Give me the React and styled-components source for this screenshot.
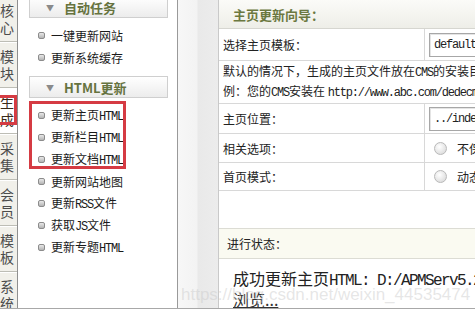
import React from "react";
import styled, { createGlobalStyle } from "styled-components";

const GlobalStyle = createGlobalStyle`
    body {
        margin: 0;
        background: #fff;
        overflow: hidden;
        font-family: "Noto Sans CJK SC", "Liberation Sans", sans-serif;
        font-size: 12px;
        color: #222;
    }
`

const Page = styled.div`
    display: flex;
    height: 308px;
    border-bottom: 1px solid #a8a8a8;
    overflow: hidden;
    `
const TabColumn = styled.div`
    width: 17px;
    flex-shrink: 0;
    border-right: 1px solid #8f8f8f;
    background: #f1f0ea;
    margin-top: -4px;
    `
const Tab = styled.div`
    height: 45px;
    display: flex;
    flex-direction: column;
    align-items: center;
    justify-content: center;
    padding-right: 3px;
    font-size: 14px;
    line-height: 17px;
    color: ${p => p.$active ? "#3a2a1a" : "#4c4c4c"};
    background: ${p => p.$active ? "#fff" : "transparent"};
    border-bottom: 1px solid #bdbdb5;
    box-shadow: 0 1px 0 #fff;
    position: relative;
    `
const TabMark = styled.span`
    position: absolute;
    left: -3px;
    right: 0;
    top: 7px;
    bottom: 8px;
    border: 3px solid #d53b43;
    `
const Menu = styled.div`
    width: 159px;
    flex-shrink: 0;
    border-right: 1px solid #9a9a9a;
    margin-top: -4px;
    `
const Group = styled.div`
    margin-bottom: ${p => p.$gap || 0}px;
    `
const GroupHead = styled.div`
    height: 20px;
    margin-left: 11px;
    width: 121px;
    display: flex;
    align-items: center;
    gap: 10px;
    padding-left: 16px;
    border: 1px solid #cfcfcf;
    background: linear-gradient(#ffffff, #ececec);
    font-size: 13px;
    font-weight: bold;
    color: #66733f;
    box-sizing: content-box;
    `
const Arrow = styled.span`
    font-size: 8px;
    color: #8a8a8a;
    font-weight: normal;
    `
const ItemList = styled.ul`
    list-style: none;
    margin: 0;
    padding: 6px 0 0 0;
    position: relative;
    `
const Item = styled.li`
    height: 22px;
    display: flex;
    align-items: center;
    gap: 6px;
    padding-left: 20px;
    font-size: 12px;
    color: #1a1a1a;
    `
const Bullet = styled.span`
    width: 5px;
    height: 5px;
    border: 1px solid #8c8c8c;
    border-radius: 2px;
    background: linear-gradient(#e8e8e8, #b4b4b4);
    `
const Label = styled.span`
    white-space: nowrap;
    `
const Latin = styled.span`
    font-family: "Liberation Mono", monospace;
    letter-spacing: -1.2px;
    `
const HighlightBox = styled.div`
    position: absolute;
    left: 11px;
    top: 3px;
    width: 91px;
    height: 62px;
    border: 3px solid #d53b43;
    pointer-events: none;
    `
const Splitter = styled.div`
    width: 40px;
    flex-shrink: 0;
    background: linear-gradient(90deg, #f7f7f7 0, #f3f3f3 19px, #e9e9e9 20px, #ececec 40px);
    border-right: 1px solid #c9c9c9;
    `
const Panel = styled.div`
    flex: 1;
    display: flex;
    flex-direction: column;
    min-width: 0;
    `
const PanelHead = styled.div`
    height: 28px;
    flex-shrink: 0;
    display: flex;
    align-items: center;
    padding-left: 14px;
    background: linear-gradient(#fbfbf8, #eeeee8);
    border-bottom: 1px solid #d6d6d0;
    font-size: 13px;
    font-weight: bold;
    color: #6b7840;
    `
const Table = styled.div`
    display: grid;
    grid-template-columns: 205px 1fr;
    `
const Cell = styled.div`
    height: ${p => p.$h}px;
    display: flex;
    align-items: center;
    padding-left: ${p => p.$pad ?? 4}px;
    border-bottom: 1px solid #d8d8d8;
    border-left: ${p => p.$sep ? "1px solid #d8d8d8" : "none"};
    grid-column: ${p => p.$wide ? "1 / 3" : "auto"};
    white-space: nowrap;
    overflow: hidden;
    `
const Note = styled.div`
    display: flex;
    flex-direction: column;
    line-height: 17px;
    `
const Field = styled.div`
    height: 22px;
    width: 60px;
    flex-shrink: 0;
    display: flex;
    align-items: center;
    padding-left: 4px;
    border: 1px solid #a7a7a7;
    border-right: none;
    box-shadow: inset 1px 1px 0 #e4e4e4;
    `
const Radio = styled.span`
    width: 11px;
    height: 11px;
    margin-left: 9px;
    margin-right: 10px;
    flex-shrink: 0;
    border-radius: 50%;
    border: 1px solid #b9b9b9;
    background: radial-gradient(circle at 40% 35%, #ffffff, #d4d4d4);
    `
const Blank = styled.div`
    height: 37px;
    `
const StatusHead = styled.div`
    height: 29px;
    display: flex;
    align-items: center;
    padding-left: 8px;
    background: #fafaf1;
    border-top: 1px solid #dcdcd4;
    border-bottom: 1px solid #dcdcd4;
    `
const StatusBody = styled.div`
    padding: 10px 0 0 14px;
    font-size: 16px;
    line-height: 18px;
    white-space: nowrap;
    position: relative;
    `
const BigLatin = styled.span`
    font-family: "Liberation Mono", monospace;
    letter-spacing: -1.6px;
    `
const Link = styled.a`
    color: #333;
    text-decoration: underline;
    `
const Watermark = styled.span`
    position: absolute;
    left: -38px;
    top: 27px;
    font-family: "Liberation Sans", sans-serif;
    font-size: 17px;
    color: rgba(200, 200, 200, 0.45);
    pointer-events: none;
    `

const tabs = [["核", "心"], ["模", "块"], ["生", "成"], ["采", "集"], ["会", "员"], ["模", "板"], ["系", "统"]]

const renderText = (t) => {
    const parts = t.split(/([A-Za-z][A-Za-z:/.]*)/)
    return parts.map((s, i) => /[A-Za-z]/.test(s) ? <Latin key={i}>{s}</Latin> : s)
}

export default function App() {
    return (
        <>
            <GlobalStyle />
            <Page>
                <TabColumn>
                    {tabs.map((t, i) => (
                        <Tab key={i} $active={i === 2}>
                            <span>{t[0]}</span>
                            <span>{t[1]}</span>
                            {i === 2 && <TabMark />}
                        </Tab>
                    ))}
                </TabColumn>

                <Menu>
                    <Group $gap={8}>
                        <GroupHead><Arrow>▼</Arrow>自动任务</GroupHead>
                        <ItemList>
                            <Item><Bullet /><Label>一键更新网站</Label></Item>
                            <Item><Bullet /><Label>更新系统缓存</Label></Item>
                        </ItemList>
                    </Group>
                    <Group>
                        <GroupHead><Arrow>▼</Arrow>HTML更新</GroupHead>
                        <ItemList>
                            {["更新主页HTML", "更新栏目HTML", "更新文档HTML", "更新网站地图", "更新RSS文件", "获取JS文件", "更新专题HTML"].map(t => (
                                <Item key={t}><Bullet /><Label>{renderText(t)}</Label></Item>
                            ))}
                            <HighlightBox />
                        </ItemList>
                    </Group>
                </Menu>

                <Splitter />

                <Panel>
                    <PanelHead>主页更新向导：</PanelHead>
                    <Table>
                        <Cell $h={31}>选择主页模板：</Cell>
                        <Cell $h={31} $sep>
                            <Field><Latin>default</Latin></Field>
                        </Cell>
                        <Cell $h={42} $wide>
                            <Note>
                                <span>默认的情况下，生成的主页文件放在<Latin>CMS</Latin>的安装目录</span>
                                <span>例：您的<Latin>CMS</Latin>安装在 <Latin>http://www.abc.com/dedecms/</Latin></span>
                            </Note>
                        </Cell>
                        <Cell $h={29}>主页位置：</Cell>
                        <Cell $h={29} $sep>
                            <Field><Latin>../index.html</Latin></Field>
                        </Cell>
                        <Cell $h={28}>相关选项：</Cell>
                        <Cell $h={28} $sep $pad={0}><Radio />不保留</Cell>
                        <Cell $h={27}>首页模式：</Cell>
                        <Cell $h={27} $sep $pad={0}><Radio />动态浏览</Cell>
                    </Table>
                    <Blank />
                    <StatusHead>进行状态：</StatusHead>
                    <StatusBody>
                        <div>成功更新主页<BigLatin>HTML: D:/APMServ5.2.6/www/</BigLatin></div>
                        <Link href="#">浏览...</Link>
                        <Watermark>https://blog.csdn.net/weixin_44535474</Watermark>
                    </StatusBody>
                </Panel>
            </Page>
        </>
    )
}
